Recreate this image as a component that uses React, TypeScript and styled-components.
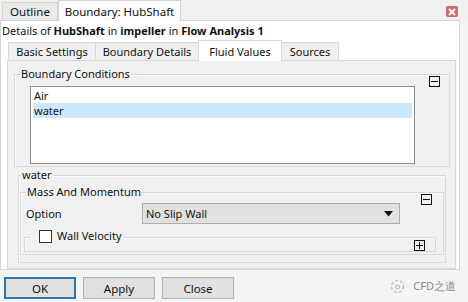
import React, { useState } from 'react'
import styled, { createGlobalStyle } from 'styled-components'

const GlobalStyle = createGlobalStyle`
    html, body {
        margin: 0;
        padding: 0;
        background: #f4f4f4;
    }
    * {
        box-sizing: border-box;
    }
`

const conditions = ['Air', 'water']

export default function App() {
    const [selected, setSelected] = useState<string>('water')

    return (
        <Window>
            <GlobalStyle />
            <TopStrip>
                <TopTab $width={56}>Outline</TopTab>
                <TopTab $width={123} $active>
                    Boundary: HubShaft
                </TopTab>
                <CloseButton aria-label="close">
                    <svg width="8" height="8" viewBox="0 0 8 8">
                        <path d="M1 1 L7 7 M7 1 L1 7" stroke="#fff" strokeWidth="2" />
                    </svg>
                </CloseButton>
            </TopStrip>

            <Body>
                <Details>
                    Details of <b>HubShaft</b> in <b>impeller</b> in <b>Flow Analysis 1</b>
                </Details>

                <TabRow>
                    <Tab $width={88}>Basic Settings</Tab>
                    <Tab $width={104}>Boundary Details</Tab>
                    <Tab $width={84} $active>
                        Fluid Values
                    </Tab>
                    <Tab $width={58}>Sources</Tab>
                </TabRow>

                <TabPanel>
                    <Group $inset={[0, 0]} $gapTop={0}>
                        <Legend>Boundary Conditions</Legend>
                        <Toggle $right={9} $top={-5} />
                        <ListBox>
                            {conditions.map((c) => (
                                <ListItem
                                    key={c}
                                    $selected={c === selected}
                                    onClick={() => setSelected(c)}
                                >
                                    {c}
                                </ListItem>
                            ))}
                        </ListBox>
                    </Group>

                    <Group $inset={[4, 4]} $gapTop={1} $plain>
                        <Legend $plain>water</Legend>
                        <Group $inset={[1, 1]} $gapTop={3}>
                            <Legend>Mass And Momentum</Legend>
                            <Toggle $right={11} $top={-5} />
                            <OptionRow>
                                <OptionLabel>Option</OptionLabel>
                                <Select>
                                    <span>No Slip Wall</span>
                                    <svg width="9" height="6" viewBox="0 0 9 6">
                                        <path d="M0 0 H9 L4.5 5.5 Z" fill="#111" />
                                    </svg>
                                </Select>
                            </OptionRow>
                            <Group $inset={[3, 7]} $gapTop={0} $collapsed>
                                <Legend>
                                    <CheckRow>
                                        <CheckBox />
                                        Wall Velocity
                                    </CheckRow>
                                </Legend>
                                <Toggle $right={10} $top={-6} $plus />
                            </Group>
                        </Group>
                    </Group>
                </TabPanel>
            </Body>

            <Footer>
                <Button $primary>OK</Button>
                <Button>Apply</Button>
                <Button>Close</Button>
                <Watermark>
                    <svg width="15" height="15" viewBox="0 0 15 15">
                        <circle cx="7.5" cy="7.5" r="6" fill="none" stroke="#b5b5b5" strokeWidth="1.2" strokeDasharray="3 2" />
                        <circle cx="7.5" cy="8" r="2" fill="none" stroke="#b5b5b5" strokeWidth="1" />
                    </svg>
                    CFD之道
                </Watermark>
            </Footer>
        </Window>
    )
}

const Window = styled.div`
    width: 468px;
    height: 302px;
    display: flex;
    flex-direction: column;
    background: #f4f4f4;
    font-family: 'Noto Sans', 'Open Sans', sans-serif;
    font-size: 11px;
    color: #111;
    overflow: hidden;
`

const TopStrip = styled.div`
    height: 20px;
    display: flex;
    align-items: flex-end;
    padding-left: 2px;
    background: #f0f0f0;
    position: relative;
`

const TopTab = styled.div<{ $width: number; $active?: boolean }>`
    width: ${(p) => p.$width}px;
    height: ${(p) => (p.$active ? 21 : 18)}px;
    margin-bottom: ${(p) => (p.$active ? -1 : 0)}px;
    display: flex;
    align-items: center;
    justify-content: center;
    background: ${(p) => (p.$active ? '#fbfbfb' : '#e9e9e9')};
    border: 1px solid #d4d4d4;
    border-bottom: none;
    font-size: 11.5px;
    z-index: ${(p) => (p.$active ? 1 : 0)};
`

const CloseButton = styled.div`
    position: absolute;
    right: 10px;
    top: 6px;
    width: 12px;
    height: 11px;
    border-radius: 2px;
    background: #cf6a6a;
    display: flex;
    align-items: center;
    justify-content: center;
`

const Body = styled.div`
    width: 460px;
    height: 250px;
    background: #fff;
    border: 1px solid #d4d4d4;
    display: flex;
    flex-direction: column;
`

const Details = styled.div`
    height: 18px;
    padding-left: 1px;
    display: flex;
    align-items: center;
    white-space: pre;
    font-size: 11px;

    b {
        font-weight: 700;
    }
`

const TabRow = styled.div`
    display: flex;
    align-items: flex-end;
    padding-left: 7px;
    height: 21px;
`

const Tab = styled.div<{ $width: number; $active?: boolean }>`
    width: ${(p) => p.$width}px;
    height: ${(p) => (p.$active ? 21 : 18)}px;
    margin-bottom: ${(p) => (p.$active ? -1 : 0)}px;
    display: flex;
    align-items: center;
    justify-content: center;
    background: ${(p) => (p.$active ? '#fff' : '#f0f0f0')};
    border: 1px solid #d9d9d9;
    border-bottom: none;
    margin-right: -1px;
    z-index: ${(p) => (p.$active ? 1 : 0)};
`

const TabPanel = styled.div`
    margin: 0 3px 0 6px;
    flex: 1;
    background: #f0f0f0;
    border: 1px solid #d9d9d9;
    padding: 6px 5px 5px 6px;
    display: flex;
    flex-direction: column;
`

const Group = styled.fieldset<{
    $inset: [number, number]
    $gapTop: number
    $plain?: boolean
    $collapsed?: boolean
}>`
    position: relative;
    margin: ${(p) => p.$gapTop}px ${(p) => p.$inset[1]}px 0 ${(p) => p.$inset[0]}px;
    padding: ${(p) => (p.$collapsed ? '0 0 5px' : '0 0 2px')};
    border: 1px solid #d8d8d8;
    box-shadow: inset 1px 1px 0 #fafafa;
    min-width: 0;
    flex: ${(p) => (p.$plain ? 1 : 'none')};
`

const Legend = styled.legend<{ $plain?: boolean }>`
    margin-left: ${(p) => (p.$plain ? 2 : 5)}px;
    padding: 0 1px;
    line-height: 14px;
    font-size: 11px;
`

const Toggle = styled.div<{ $right: number; $top: number; $plus?: boolean }>`
    position: absolute;
    right: ${(p) => p.$right}px;
    top: ${(p) => p.$top}px;
    width: 11px;
    height: 11px;
    border: 1px solid #111;
    background: #f0f0f0;

    &::before {
        content: '';
        position: absolute;
        left: 1px;
        right: 1px;
        top: 4px;
        height: 1px;
        background: #111;
    }

    &::after {
        content: '';
        display: ${(p) => (p.$plus ? 'block' : 'none')};
        position: absolute;
        top: 1px;
        bottom: 1px;
        left: 4px;
        width: 1px;
        background: #111;
    }
`

const ListBox = styled.div`
    margin: 5px 34px 0 15px;
    height: 78px;
    background: #fff;
    border: 1px solid #8c8c8c;
    padding: 1px 2px;
    display: flex;
    flex-direction: column;
`

const ListItem = styled.div<{ $selected?: boolean }>`
    height: 15px;
    line-height: 15px;
    padding-left: 1px;
    background: ${(p) => (p.$selected ? '#cce8ff' : 'transparent')};
`

const OptionRow = styled.div`
    display: flex;
    align-items: center;
    margin: 4px 0 5px 5px;
`

const OptionLabel = styled.div`
    width: 116px;
`

const Select = styled.div`
    width: 258px;
    height: 21px;
    background: #e1e1e1;
    border: 1px solid #adadad;
    display: flex;
    align-items: center;
    justify-content: space-between;
    padding: 0 6px 0 3px;
`

const CheckRow = styled.span`
    display: inline-flex;
    align-items: center;
    gap: 5px;
`

const CheckBox = styled.span`
    width: 13px;
    height: 13px;
    border: 1px solid #333;
    background: #fff;
    margin-left: 8px;
`

const Footer = styled.div`
    flex: 1;
    display: flex;
    align-items: center;
    gap: 7px;
    padding: 4px 0 0 4px;
`

const Button = styled.div<{ $primary?: boolean }>`
    width: 72px;
    height: 22px;
    display: flex;
    align-items: center;
    justify-content: center;
    background: #e1e1e1;
    border: ${(p) => (p.$primary ? '2px solid #2a77ad' : '1px solid #adadad')};
    font-size: 11.5px;
`

const Watermark = styled.div`
    margin-left: auto;
    margin-right: 12px;
    display: flex;
    align-items: center;
    gap: 8px;
    color: #8a8a8a;
    font-size: 11px;
    margin-top: -4px;
`
